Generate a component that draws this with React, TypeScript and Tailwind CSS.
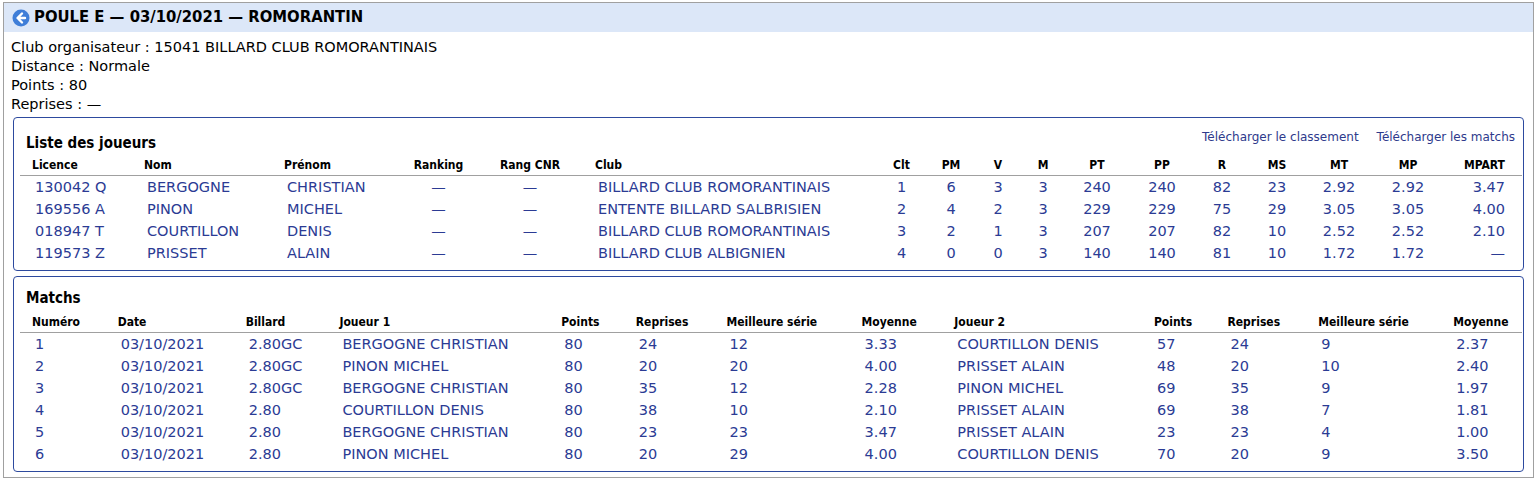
import React from "react";

const F = { fontFamily: '"DejaVu Sans Condensed", "DejaVu Sans", Tahoma, sans-serif' };
const B = { fontFamily: '"DejaVu Sans", Tahoma, sans-serif' };

type Col = { w: number; a: "l" | "c" | "r" };
const pc: Col[] = [
  { w: 112, a: "l" }, { w: 140, a: "l" }, { w: 128, a: "l" }, { w: 77, a: "c" }, { w: 106, a: "c" },
  { w: 290, a: "l" }, { w: 57, a: "c" }, { w: 42, a: "c" }, { w: 52, a: "c" }, { w: 38, a: "c" },
  { w: 70, a: "c" }, { w: 60, a: "c" }, { w: 60, a: "c" }, { w: 50, a: "c" }, { w: 74, a: "c" },
  { w: 64, a: "c" }, { w: 82, a: "r" },
];
const ph = ["Licence", "Nom", "Prénom", "Ranking", "Rang CNR", "Club", "Clt", "PM", "V", "M", "PT", "PP", "R", "MS", "MT", "MP", "MPART"];
const pr = [
  ["130042 Q", "BERGOGNE", "CHRISTIAN", "—", "—", "BILLARD CLUB ROMORANTINAIS", "1", "6", "3", "3", "240", "240", "82", "23", "2.92", "2.92", "3.47"],
  ["169556 A", "PINON", "MICHEL", "—", "—", "ENTENTE BILLARD SALBRISIEN", "2", "4", "2", "3", "229", "229", "75", "29", "3.05", "3.05", "4.00"],
  ["018947 T", "COURTILLON", "DENIS", "—", "—", "BILLARD CLUB ROMORANTINAIS", "3", "2", "1", "3", "207", "207", "82", "10", "2.52", "2.52", "2.10"],
  ["119573 Z", "PRISSET", "ALAIN", "—", "—", "BILLARD CLUB ALBIGNIEN", "4", "0", "0", "3", "140", "140", "81", "10", "1.72", "1.72", "—"],
];
const mw = [85, 127, 93, 220, 74, 90, 134, 92, 198, 73, 90, 134, 80];
const mh = ["Numéro", "Date", "Billard", "Joueur 1", "Points", "Reprises", "Meilleure série", "Moyenne", "Joueur 2", "Points", "Reprises", "Meilleure série", "Moyenne"];
const mr = [
  ["1", "03/10/2021", "2.80GC", "BERGOGNE CHRISTIAN", "80", "24", "12", "3.33", "COURTILLON DENIS", "57", "24", "9", "2.37"],
  ["2", "03/10/2021", "2.80GC", "PINON MICHEL", "80", "20", "20", "4.00", "PRISSET ALAIN", "48", "20", "10", "2.40"],
  ["3", "03/10/2021", "2.80GC", "BERGOGNE CHRISTIAN", "80", "35", "12", "2.28", "PINON MICHEL", "69", "35", "9", "1.97"],
  ["4", "03/10/2021", "2.80", "COURTILLON DENIS", "80", "38", "10", "2.10", "PRISSET ALAIN", "69", "38", "7", "1.81"],
  ["5", "03/10/2021", "2.80", "BERGOGNE CHRISTIAN", "80", "23", "23", "3.47", "PRISSET ALAIN", "23", "23", "4", "1.00"],
  ["6", "03/10/2021", "2.80", "PINON MICHEL", "80", "20", "29", "4.00", "COURTILLON DENIS", "70", "20", "9", "3.50"],
];

function cls(a: string, head: boolean) {
  if (a === "l") return head ? "text-left pl-3" : "text-left pl-[15px]";
  if (a === "r") return "text-right pr-[17px]";
  return "text-center";
}

export default function App() {
  return (
    <div style={F} className="w-[1537px] h-[479px] bg-white p-[2px] pl-[3px]">
      <div className="border border-[#a0a0a0] h-[476px] w-[1531px]">
        <div className="h-[29px] bg-[#dce7f8] flex items-center pl-[8px] gap-[4px] text-[16.5px] font-bold text-black">
          <svg width="18" height="18" viewBox="0 0 18 18">
            <circle cx="9" cy="9" r="8.5" fill="#3f7ed8" />
            <path d="M10 4.5 L5.5 9 L10 13.5 M5.8 9 H13" stroke="white" strokeWidth="2.4" fill="none" strokeLinecap="round" strokeLinejoin="round" />
          </svg>
          <span>POULE E — 03/10/2021 — ROMORANTIN</span>
        </div>
        <div style={B} className="pl-[7px] pt-[6px] text-[14.5px] leading-[19px] text-black">
          <div>Club organisateur : 15041 BILLARD CLUB ROMORANTINAIS</div>
          <div>Distance : Normale</div>
          <div>Points : 80</div>
          <div>Reprises : —</div>
        </div>
        <div className="mx-[9px] mt-[3px] border border-[#2d4a9e] rounded-[4px] h-[154px] px-[6px]">
          <div className="flex justify-between items-end h-[32px]">
            <div className="text-[15px] font-bold text-black pl-[6px] leading-[18px] mb-[-2px]">Liste des joueurs</div>
            <div style={B} className="flex gap-[18px] text-[12px] text-[#2e3a8c] leading-[14px] mb-[6px] pr-[2px]">
              <span>Télécharger le classement</span><span>Télécharger les matchs</span>
            </div>
          </div>
          <table className="border-collapse table-fixed mt-[7px]" style={{ width: 1502 }}>
            <colgroup>{pc.map((c, i) => <col key={i} style={{ width: c.w }} />)}</colgroup>
            <thead>
              <tr className="border-b border-[#a0a0a0] h-[18px] text-[12px] font-bold text-black">
                {ph.map((h, i) => <th key={i} className={cls(pc[i].a, true) + " font-bold align-top leading-[16px]"}>{h}</th>)}
              </tr>
            </thead>
            <tbody style={B}>
              {pr.map((r, j) => (
                <tr key={j} className="h-[22px] text-[14.5px] text-[#2b3b94]">
                  {r.map((v, i) => <td key={i} className={cls(pc[i].a, false) + " leading-[22px] whitespace-nowrap"}>{v}</td>)}
                </tr>
              ))}
            </tbody>
          </table>
        </div>
        <div className="mx-[9px] mt-[5px] border border-[#2d4a9e] rounded-[4px] h-[196px] px-[6px]">
          <div className="text-[15px] font-bold text-black pl-[6px] pt-[12px] leading-[18px]">Matchs</div>
          <table className="border-collapse table-fixed mt-[7px]" style={{ width: 1502 }}>
            <colgroup>{mw.map((w, i) => <col key={i} style={{ width: w }} />)}</colgroup>
            <thead>
              <tr className="border-b border-[#a0a0a0] h-[18px] text-[12px] text-black">
                {mh.map((h, i) => <th key={i} className="text-left pl-3 font-bold align-top leading-[16px] whitespace-nowrap">{h}</th>)}
              </tr>
            </thead>
            <tbody style={B}>
              {mr.map((r, j) => (
                <tr key={j} className="h-[22px] text-[14.5px] text-[#2b3b94]">
                  {r.map((v, i) => <td key={i} className="text-left pl-[15px] leading-[22px] whitespace-nowrap">{v}</td>)}
                </tr>
              ))}
            </tbody>
          </table>
        </div>
      </div>
    </div>
  );
}
